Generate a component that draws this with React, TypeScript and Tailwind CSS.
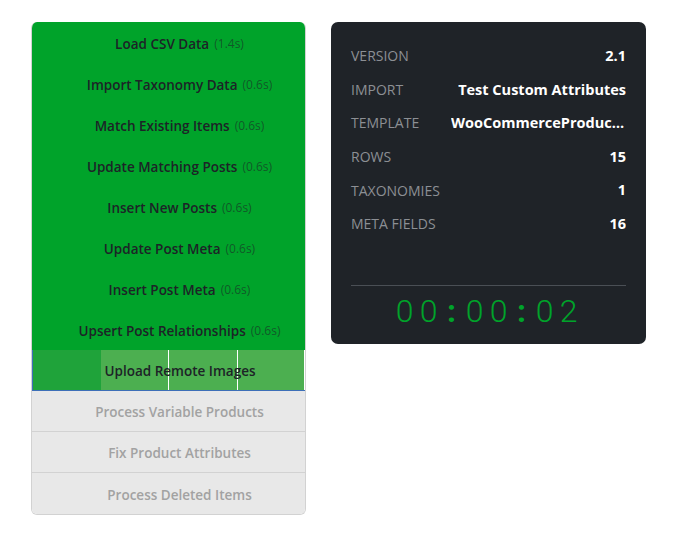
import React from 'react';

type Step = { label: string; time?: string; state: 'done' | 'active' | 'pending' };

const STEPS: Step[] = [
  { label: 'Load CSV Data', time: '1.4s', state: 'done' },
  { label: 'Import Taxonomy Data', time: '0.6s', state: 'done' },
  { label: 'Match Existing Items', time: '0.6s', state: 'done' },
  { label: 'Update Matching Posts', time: '0.6s', state: 'done' },
  { label: 'Insert New Posts', time: '0.6s', state: 'done' },
  { label: 'Update Post Meta', time: '0.6s', state: 'done' },
  { label: 'Insert Post Meta', time: '0.6s', state: 'done' },
  { label: 'Upsert Post Relationships', time: '0.6s', state: 'done' },
  { label: 'Upload Remote Images', state: 'active' },
  { label: 'Process Variable Products', state: 'pending' },
  { label: 'Fix Product Attributes', state: 'pending' },
  { label: 'Process Deleted Items', state: 'pending' },
];

const STATS: [string, string][] = [
  ['Version', '2.1'],
  ['Import', 'Test Custom Attributes'],
  ['Template', 'WooCommerceProductsWithAttributes'],
  ['Rows', '15'],
  ['Taxonomies', '1'],
  ['Meta Fields', '16'],
];

const TIMER = '00:00:02';

function StepRow({ step }: { step: Step }) {
  if (step.state === 'active') {
    return (
      <div className="relative h-[41px] flex items-center justify-center pl-[22px] pt-[3px] bg-[#4caf50] border-b border-[#3d6fb8] border-l border-l-[#3d6fb8]">
        <div className="absolute inset-y-0 left-0 w-[68px] bg-[#1fa33a]" />
        <div className="absolute inset-y-0 left-[135px] w-px bg-white" />
        <div className="absolute inset-y-0 left-[204px] w-px bg-white" />
        <div className="absolute inset-y-0 right-0 w-px bg-white" />
        <span className="relative text-[13.5px] font-semibold text-[#1d2327]">{step.label}</span>
      </div>
    );
  }
  if (step.state === 'pending') {
    return (
      <div className="h-[41px] flex items-center justify-center pl-[22px] pt-[3px] bg-[#e8e8e8] border-b border-[#d2d2d2] last:border-b-0">
        <span className="text-[13.5px] font-semibold text-[#a2a2a2]">{step.label}</span>
      </div>
    );
  }
  return (
    <div className="h-[41px] flex items-center justify-center pl-[22px] pt-[3px] bg-[#00a32a]">
      <span className="text-[13.5px] font-semibold text-[#1d2327]">{step.label}</span>
      {step.time && (
        <span className="ml-[5px] text-[12px] text-[#1d2327]/60">({step.time})</span>
      )}
    </div>
  );
}

export default function App() {
  return (
    <div
      className="w-[696px] h-[548px] bg-white flex items-start gap-[25px] pl-[31px] pt-[22px]"
      style={{ fontFamily: '"Open Sans", "Noto Sans", sans-serif' }}
    >
      <div className="w-[275px] rounded-[6px] overflow-hidden border border-[#d2d2d2] border-t-0 flex flex-col">
        {STEPS.map((s) => (
          <StepRow key={s.label} step={s} />
        ))}
      </div>

      <div className="w-[315px] h-[322px] rounded-[7px] bg-[#1f2328] px-[20px] pt-[17px] flex flex-col">
        <div className="flex flex-col">
          {STATS.map(([k, v]) => (
            <div key={k} className="h-[33.6px] flex items-center justify-between gap-4">
              <span className="uppercase text-[14px] text-[#8c8f94] shrink-0">{k}</span>
              <span className="max-w-[175px] text-[14.5px] font-bold text-white truncate">{v}</span>
            </div>
          ))}
        </div>
        <div className="mt-auto mb-[13px] border-t border-[#4a4f55] pt-[5px] flex justify-center">
          <div
            className="flex text-[32px] leading-[40px] text-[#00a32a] mr-[4px]"
            style={{ fontFamily: 'Roboto, "DejaVu Sans", sans-serif' }}
          >
            {TIMER.split('').map((c, i) =>
              c === ':' ? (
                <span key={i} className="w-[22px] text-center font-bold">:</span>
              ) : (
                <span key={i} className="w-[24px] text-center font-light">{c}</span>
              ),
            )}
          </div>
        </div>
      </div>
    </div>
  );
}
